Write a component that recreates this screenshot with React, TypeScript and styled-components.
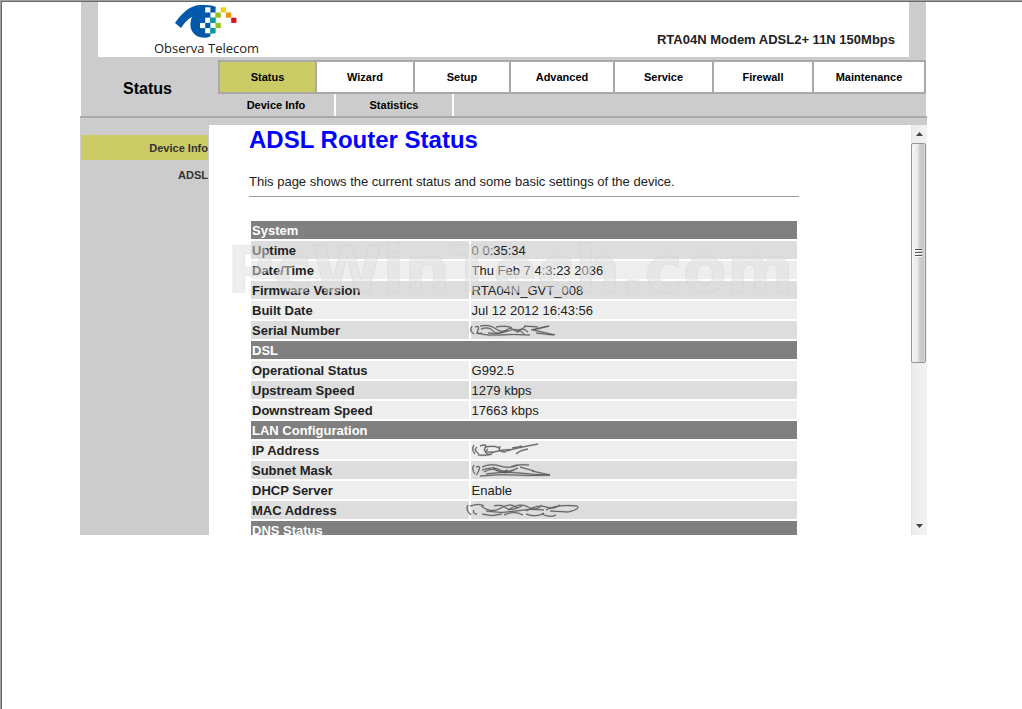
import React from 'react';
import styled, { createGlobalStyle } from 'styled-components';

const GlobalStyle = createGlobalStyle`
  * { box-sizing: border-box; }
  body { margin: 0; background: #fff; font-family: "Liberation Sans", Arial, sans-serif; }
`;

const Frame = styled.div`
  min-height: 100vh;
  padding: 1px 17px 0 1px;
  border-top: 1px solid #a0a0a0;
  border-left: 1px solid #a0a0a0;
  box-shadow: inset 1px 1px 0 #696969;
`;

const Page = styled.div`
  max-width: 847px;
  margin: 0 auto;
`;

const Top = styled.header`
  margin: 0 1px;
  background: #ccc;
`;

const Banner = styled.div`
  display: flex;
  justify-content: space-between;
  height: 55px;
  margin: 0 17px;
  padding-right: 14px;
  padding-left: 56px;
  background: #fff;
`;

const Model = styled.div`
  padding-top: 30px;
  font-size: 13px;
  line-height: 16px;
  font-weight: bold;
  color: #222;
`;

const MenuArea = styled.div`
  display: flex;
  padding-top: 3px;
`;

const Section = styled.div`
  flex: 0 0 137px;
  padding: 19px 0 0 42px;
  font-size: 16px;
  line-height: 20px;
  font-weight: bold;
`;

const Menus = styled.div`
  flex: 1;
`;

const MainNav = styled.nav`
  display: flex;
  gap: 2px;
  padding: 2px;
  background: #a9a9a9;
`;

const Tab = styled.a<{ $size: number; $active?: boolean }>`
  flex: ${p => p.$size} 1 0;
  height: 30px;
  background: ${p => (p.$active ? '#cc6' : '#fff')};
  color: #000;
  font-size: 11px;
  line-height: 30px;
  font-weight: bold;
  text-align: center;
  text-decoration: none;
`;

const SubNav = styled.nav`
  display: flex;
  height: 22px;
`;

const SubTab = styled.a`
  width: 118px;
  border-right: 2px solid #fff;
  color: #000;
  font-size: 11px;
  line-height: 22px;
  font-weight: bold;
  text-align: center;
  text-decoration: none;
`;

const Divider = styled.div`
  height: 9px;
  border-top: 2px solid #a9a9a9;
  background: #ccc;
`;

const Body = styled.div`
  display: flex;
  height: 410px;
`;

const Side = styled.nav`
  flex: 0 0 129px;
  padding: 10px 1px;
  background: #ccc;
`;

const SideLink = styled.a<{ $active?: boolean }>`
  display: block;
  margin-bottom: 2px;
  padding-top: 1px;
  background: ${p => (p.$active ? '#cc6' : 'transparent')};
  color: #333;
  font-size: 11px;
  line-height: 24px;
  font-weight: bold;
  text-align: right;
  text-decoration: none;
`;

const Content = styled.main`
  position: relative;
  flex: 1;
  overflow: hidden;
  padding-left: 40px;
`;

const Inner = styled.div`
  max-width: 550px;
`;

const Title = styled.h2`
  margin: 0;
  color: #00f;
  font-size: 24px;
  line-height: 30px;
`;

const Intro = styled.p`
  margin: 19px 0 6px;
  color: #222;
  font-size: 13px;
  line-height: 16px;
`;

const Rule = styled.hr`
  height: 2px;
  margin: 0 0 21px;
  border: 0;
  border-top: 1px solid #999;
`;

const Data = styled.table`
  width: 100%;
  border-spacing: 2px;
  table-layout: fixed;
  color: #222;
  font-size: 13px;
  line-height: 16px;
`;

const Group = styled.th`
  padding: 2px 1px 0;
  background: #808080;
  color: #fff;
  text-align: left;
`;

const Row = styled.tr<{ $dark: boolean }>`
  background: ${p => (p.$dark ? '#ddd' : '#eee')};
`;

const Name = styled.th`
  padding: 2px 1px 0;
  text-align: left;
`;

const Value = styled.td`
  height: 18px;
  padding: 2px 1px 0;
`;

const Scribble = styled.svg`
  display: block;
  height: 16px;
  margin-left: -6px;
  overflow: visible;
`;

const Watermark = styled.div`
  position: absolute;
  top: 108px;
  left: 18px;
  color: rgba(222, 222, 222, 0.5);
  font-family: "DejaVu Sans", Verdana, sans-serif;
  font-size: 64px;
  line-height: 74px;
  font-weight: bold;
  font-kerning: none;
  white-space: nowrap;
  -webkit-text-stroke: 1px rgba(190, 190, 190, 0.18);
  pointer-events: none;
`;

const ScrollBar = styled.div`
  display: flex;
  flex-direction: column;
  flex: 0 0 16px;
  border-left: 1px solid #e3e3e3;
  background: linear-gradient(90deg, #ececec, #f2f2f2);
`;

const Arrow = styled.button`
  display: flex;
  align-items: center;
  justify-content: center;
  height: 18px;
  padding: 0;
  border: 0;
  background: transparent;
`;

const Track = styled.div`
  flex: 1;
`;

const Thumb = styled.div`
  display: flex;
  align-items: center;
  justify-content: center;
  height: 220px;
  margin-right: 1px;
  margin-left: -1px;
  border: 1px solid #949494;
  border-radius: 2px;
  background: linear-gradient(90deg, #f6f6f6 0%, #e9e9eb 45%, #d2d2d6 55%, #c6c6ca 85%, #dcdcdf 100%);
`;

const tabs: [string, number][] = [
  ['Status', 95], ['Wizard', 96], ['Setup', 94], ['Advanced', 102],
  ['Service', 97], ['Firewall', 98], ['Maintenance', 110],
];

const marks: Record<string, string> = {
  serial: 'M6 3q-3 5 2 8M9 4q5-2 3 3t4 3M14 3q10-2 16 3t14-1M15 6q8-3 12 2t14-1M22 10q10 2 20-2t16 3M30 4q10-2 16 1M44 5l8 4 8-6M50 9q6-6 12 0M58 3l14 1M65 7l18-4-16 4 22 5M70 10l17 2M10 10q12 3 24 2t30 0',
  ip: 'M8 2q-3 4 1 9M11 4q-4 3 2 7M14 3q8-3 5 2t8 4M19 4q12-2 15 2M22 6q-6 4 2 6M25 10q12-4 20-3M34 3q-3 6 6 6M40 8q10-3 32-7M46 5q8-1 10-2M50 11q4-4 12-5M12 12q8 1 14-1',
  mask: 'M8 2q-3 4 1 9M10 4q5-2 3 3t-3 5M16 4q9-4 18-1t18-1M16 7q12-4 18 0t18-2M18 9q8-5 14-1t16-1M27 4q6 7 15 3M45 4q5-3 18-2M54 4l14 4M20 11q18-3 34-1t30 2M14 13q20-2 36-1t34 0M66 8l18 4',
  mac: 'M2 2q-3 5 3 10M4 3q10-3 14 0M8 7q-2 4 3 4M15 3q10 8 20 2t16 0M28 3q8-2 12 2t16-2M42 7q12-8 20-3t14-2M60 8q12-7 20-4t14-2M80 7q10-6 31-4q4 3-9 6l-18-1M20 8q16 3 30 0t28-1M16 11q10 3 20 0M38 12q10-5 19 0M60 11q10 4 18-1M76 11q8 4 14 1',
};

type Entry = { name: string; value?: string; mark?: string; dark: boolean };
const groups: { title: string; rows: Entry[] }[] = [
  {
    title: 'System',
    rows: [
      { name: 'Uptime', value: '0 0:35:34', dark: true },
      { name: 'Date/Time', value: 'Thu Feb 7 4:3:23 2036', dark: false },
      { name: 'Firmware Version', value: 'RTA04N_GVT_008', dark: true },
      { name: 'Built Date', value: 'Jul 12 2012 16:43:56', dark: false },
      { name: 'Serial Number', mark: 'serial', dark: true },
    ],
  },
  {
    title: 'DSL',
    rows: [
      { name: 'Operational Status', value: 'G992.5', dark: false },
      { name: 'Upstream Speed', value: '1279 kbps', dark: true },
      { name: 'Downstream Speed', value: '17663 kbps', dark: false },
    ],
  },
  {
    title: 'LAN Configuration',
    rows: [
      { name: 'IP Address', mark: 'ip', dark: false },
      { name: 'Subnet Mask', mark: 'mask', dark: true },
      { name: 'DHCP Server', value: 'Enable', dark: false },
      { name: 'MAC Address', mark: 'mac', dark: true },
    ],
  },
  { title: 'DNS Status', rows: [] },
];

/* Checker squares of the eye: column, row, colour. */
const squares: [number, number, string][] = [
  [1, 0, '#fff'], [2, 1, '#fff'], [1, 2, '#fff'], [2, 3, '#fff'], [0, 3, '#fff'], [1, 4, '#fff'],
  [3, 0, '#fff'], [3, 2, '#fff'], [3, 4, '#fff'], [2, 5, '#fff'],
  [2, 2, '#00a19a'], [2, 4, '#00a19a'], [3, 1, '#95c11f'], [3, 3, '#95c11f'],
  [4, 0, '#fc0'], [5, 1, '#f39200'], [6, 2, '#d4141c'],
];

function Logo() {
  return (
    <svg width="106" height="55" viewBox="0 0 106 55" role="img" aria-label="Observa Telecom">
      <path d="M21 21C28 11 36 3 47 3C53 3 57 3 62 5L61 31C57 36 49 37 43 34C36 30 35 22 38 15C34 17 30 21 27 26Z" fill="#0058a8" />
      {squares.map(([c, r, fill]) => (
        <rect key={`${c}-${r}`} x={46 + c * 5.2} y={5.3 + r * 5.2} width="5.2" height="5.2" fill={fill} />
      ))}
      <text x="0" y="51" fontFamily="Open Sans, sans-serif" fontSize="13" fill="#222">Observa Telecom</text>
    </svg>
  );
}

export default function App() {
  return (
    <>
      <GlobalStyle />
      <Frame>
        <Page>
          <Top>
            <Banner>
              <Logo />
              <Model>RTA04N Modem ADSL2+ 11N 150Mbps</Model>
            </Banner>
            <MenuArea>
              <Section>Status</Section>
              <Menus>
                <MainNav>
                  {tabs.map(([label, size], i) => (
                    <Tab key={label} href="#" $size={size} $active={i === 0}>{label}</Tab>
                  ))}
                </MainNav>
                <SubNav>
                  <SubTab href="#">Device Info</SubTab>
                  <SubTab href="#">Statistics</SubTab>
                </SubNav>
              </Menus>
            </MenuArea>
          </Top>
          <Divider />
          <Body>
            <Side>
              <SideLink href="#" $active>Device Info</SideLink>
              <SideLink href="#">ADSL</SideLink>
            </Side>
            <Content>
              <Inner>
                <Title>ADSL Router Status</Title>
                <Intro>This page shows the current status and some basic settings of the device.</Intro>
                <Rule />
                <Data>
                  <colgroup>
                    <col width="40%" />
                    <col />
                  </colgroup>
                  <tbody>
                    {groups.map(g => (
                      <React.Fragment key={g.title}>
                        <tr><Group colSpan={2}>{g.title}</Group></tr>
                        {g.rows.map(r => (
                          <Row key={r.name} $dark={r.dark}>
                            <Name scope="row">{r.name}</Name>
                            <Value>
                              {r.mark ? (
                                <Scribble width="116" viewBox="0 0 116 16" aria-hidden="true">
                                  <path d={marks[r.mark]} fill="none" stroke="#bbb" strokeWidth="2" />
                                  <path d={marks[r.mark]} fill="none" stroke="#555" strokeWidth="0.9" />
                                </Scribble>
                              ) : r.value}
                            </Value>
                          </Row>
                        ))}
                      </React.Fragment>
                    ))}
                  </tbody>
                </Data>
              </Inner>
              <Watermark>PcWinTech.com</Watermark>
            </Content>
            <ScrollBar>
              <Arrow aria-label="Scroll up">
                <svg width="7" height="4" viewBox="0 0 7 4"><path d="M0 4L3.500 0L7 4Z" fill="#444" /></svg>
              </Arrow>
              <Track>
                <Thumb>
                  <svg width="7" height="8" viewBox="0 0 7 8">
                    <path d="M0 .5h7M0 3.500h7M0 6.500h7" stroke="#555" />
                    <path d="M0 1.500h7M0 4.500h7M0 7.500h7" stroke="#fff" />
                  </svg>
                </Thumb>
              </Track>
              <Arrow aria-label="Scroll down">
                <svg width="7" height="4" viewBox="0 0 7 4"><path d="M0 0L3.500 4L7 0Z" fill="#444" /></svg>
              </Arrow>
            </ScrollBar>
          </Body>
        </Page>
      </Frame>
    </>
  );
}
